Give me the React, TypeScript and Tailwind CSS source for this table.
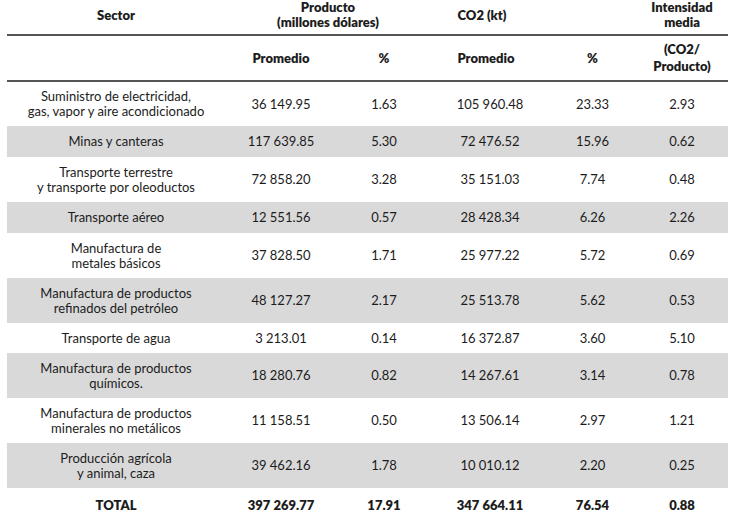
const cols = "grid grid-cols-[218px_112px_94px_118px_87px_92px]";

interface Row {
  sector: string[];
  prod: string;
  prodPct: string;
  co2: string;
  co2Pct: string;
  intensity: string;
  gray: boolean;
  h: string;
}

const rows: Row[] = [
  { sector: ["Suministro de electricidad,", "gas, vapor y aire acondicionado"], prod: "36 149.95", prodPct: "1.63", co2: "105 960.48", co2Pct: "23.33", intensity: "2.93", gray: false, h: "h-[44px]" },
  { sector: ["Minas y canteras"], prod: "117 639.85", prodPct: "5.30", co2: "72 476.52", co2Pct: "15.96", intensity: "0.62", gray: true, h: "h-[31px]" },
  { sector: ["Transporte terrestre", "y transporte por oleoductos"], prod: "72 858.20", prodPct: "3.28", co2: "35 151.03", co2Pct: "7.74", intensity: "0.48", gray: false, h: "h-[45px]" },
  { sector: ["Transporte aéreo"], prod: "12 551.56", prodPct: "0.57", co2: "28 428.34", co2Pct: "6.26", intensity: "2.26", gray: true, h: "h-[31px]" },
  { sector: ["Manufactura de", "metales básicos"], prod: "37 828.50", prodPct: "1.71", co2: "25 977.22", co2Pct: "5.72", intensity: "0.69", gray: false, h: "h-[45px]" },
  { sector: ["Manufactura de productos", "refinados del petróleo"], prod: "48 127.27", prodPct: "2.17", co2: "25 513.78", co2Pct: "5.62", intensity: "0.53", gray: true, h: "h-[45px]" },
  { sector: ["Transporte de agua"], prod: "3 213.01", prodPct: "0.14", co2: "16 372.87", co2Pct: "3.60", intensity: "5.10", gray: false, h: "h-[30px]" },
  { sector: ["Manufactura de productos", "químicos."], prod: "18 280.76", prodPct: "0.82", co2: "14 267.61", co2Pct: "3.14", intensity: "0.78", gray: true, h: "h-[45px]" },
  { sector: ["Manufactura de productos", "minerales no metálicos"], prod: "11 158.51", prodPct: "0.50", co2: "13 506.14", co2Pct: "2.97", intensity: "1.21", gray: false, h: "h-[45px]" },
  { sector: ["Producción agrícola", "y animal, caza"], prod: "39 462.16", prodPct: "1.78", co2: "10 010.12", co2Pct: "2.20", intensity: "0.25", gray: true, h: "h-[45px]" },
];

export default function App() {
  return (
    <div className="w-[732px] h-[514px] overflow-hidden bg-white text-[#1c1c1c] font-['Lato','Liberation_Sans',sans-serif] text-[13px]">
      <div className="ml-[7px] w-[721px]">
        {/* header, first line */}
        <div className={`${cols} h-[36px] border-b-2 border-[#555] font-extrabold leading-[15px] text-center`}>
          <div className="flex items-center justify-center pb-[6px]">Sector</div>
          <div className="col-span-2 flex flex-col items-center justify-center pb-[6px]">
            <span>Producto</span>
            <span>(millones dólares)</span>
          </div>
          <div className="flex items-center justify-center pb-[6px] pr-4">CO2 (kt)</div>
          <div />
          <div className="flex flex-col items-center justify-center pb-[6px]">
            <span>Intensidad</span>
            <span>media</span>
          </div>
        </div>

        {/* header, second line */}
        <div className={`${cols} h-[46px] border-b-2 border-[#555] font-extrabold leading-[17px] text-center`}>
          <div />
          <div className="flex items-center justify-center">Promedio</div>
          <div className="flex items-center justify-center">%</div>
          <div className="flex items-center justify-center pr-2">Promedio</div>
          <div className="flex items-center justify-center">%</div>
          <div className="flex flex-col items-center justify-center">
            <span>(CO2/</span>
            <span>Producto)</span>
          </div>
        </div>

        {rows.map((r, i) => (
          <div key={i} className={`${cols} ${r.h} ${r.gray ? "bg-[#d9d9d9]" : ""} leading-[15px] text-center`}>
            <div className="flex flex-col items-center justify-center">
              {r.sector.map((s) => (
                <span key={s}>{s}</span>
              ))}
            </div>
            <div className="flex items-center justify-center">{r.prod}</div>
            <div className="flex items-center justify-center">{r.prodPct}</div>
            <div className="flex items-center justify-center">{r.co2}</div>
            <div className="flex items-center justify-center">{r.co2Pct}</div>
            <div className="flex items-center justify-center">{r.intensity}</div>
          </div>
        ))}

        {/* total */}
        <div className={`${cols} h-[36px] font-extrabold text-center`}>
          <div className="flex items-center justify-center">TOTAL</div>
          <div className="flex items-center justify-center">397 269.77</div>
          <div className="flex items-center justify-center">17.91</div>
          <div className="flex items-center justify-center">347 664.11</div>
          <div className="flex items-center justify-center">76.54</div>
          <div className="flex items-center justify-center">0.88</div>
        </div>
      </div>
    </div>
  );
}
